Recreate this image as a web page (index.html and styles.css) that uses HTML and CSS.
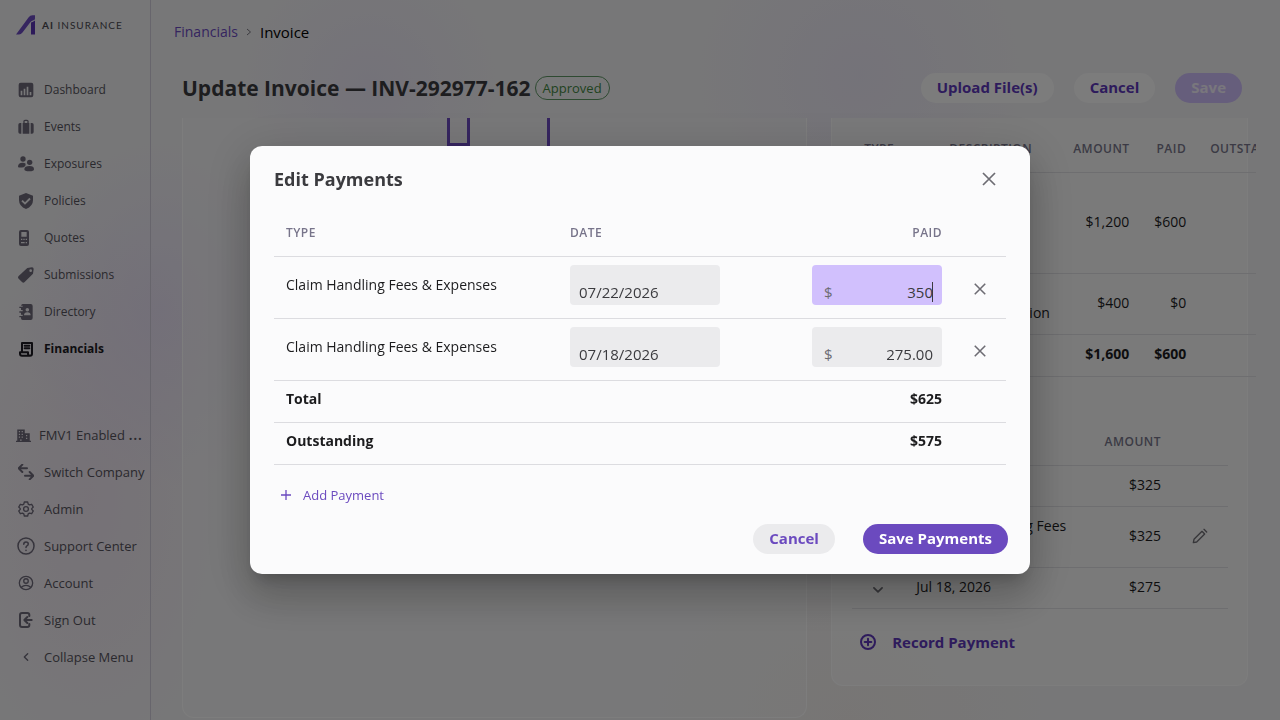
FILE: index.html
```html
<!DOCTYPE html>
<html lang="en">
<head>
<meta charset="utf-8">
<meta name="viewport" content="width=device-width, initial-scale=1">
<title>Update Invoice — INV-292977-162</title>
<link rel="stylesheet" href="styles.css">
</head>
<body>
<div class="app">
  <aside class="sidebar">
    <a class="brand" href="#">
      <svg class="brand-mark" viewBox="0 0 20 20" aria-hidden="true"><path fill="#6b4abf" d="M0 19.500 12.500 2.500Q14 .3 16.500.3H19v3.200q0 1.500-1.500 1.800-2 .4-3 1.700L6.500 17.500q-1.500 2-3.500 2z"/><path fill="#5a35b5" d="M15 7.500q2-.3 4-2v14h-4z"/></svg>
      <span class="brand-name"><b>AI</b> INSURANCE</span>
    </a>
    <nav class="menu" aria-label="Main">
      <a class="item" href="#"><svg viewBox="0 0 24 24"><path fill-rule="evenodd" d="M4 1h16q3 0 3 3v16q0 3-3 3H4q-3 0-3-3V4q0-3 3-3zm0 12v7h2.500v-7zm4.500-3v10H11V10zM13 7v13h2.500V7zm4.500 8v5H20v-5z"/></svg><span>Dashboard</span></a>
      <a class="item" href="#"><svg viewBox="0 0 24 24"><path fill-rule="evenodd" d="M7 22V6h1V3.500Q8 1 10.500 1h3Q16 1 16 3.500V6h1v16zM10 6h4V3h-4zM5 6v16H3q-2.500 0-2.500-2.500v-11Q.5 6 3 6zm14 0v16h2q2.500 0 2.500-2.500v-11Q23.500 6 21 6z"/></svg><span>Events</span></a>
      <a class="item" href="#"><svg viewBox="0 0 24 24"><circle cx="7.500" cy="4.500" r="4"/><circle cx="17.500" cy="9.500" r="4"/><path d="M0 16q0-6 7-6 3 0 4.500 1.500Q12 15 8.500 17 0 18 0 16zM9.500 20q0-5 8-5 6.500 0 6.500 5 0 3-7 3-7.500 0-7.500-3z"/></svg><span>Exposures</span></a>
      <a class="item" href="#"><svg viewBox="0 0 24 24"><path fill-rule="evenodd" d="M12 0 22.500 4v7q0 9-10.500 13Q1.500 20 1.500 11V4zm-5 10.500-2 2 5.500 5.300 8.500-8.600-2-2-6.500 6.600z"/></svg><span>Policies</span></a>
      <a class="item" href="#"><svg viewBox="0 0 24 24"><path fill-rule="evenodd" d="M4.500 0h9q3 0 3 3v18q0 3-3 3h-9q-3 0-3-3V3q0-3 3-3zM5 3v7h8V3zm-.5 10v2h2v-2zM8 13v2h2v-2zm3.500 0v2h2v-2zm-7 5v2H10v-2zm7 0v2h2v-2z"/></svg><span>Quotes</span></a>
      <a class="item" href="#"><svg viewBox="0 0 24 24"><path fill-rule="evenodd" d="M14 1.500 21 .5q2.500 0 2.500 2.500l-1 7L10 22.500q-2 2-4 0L1 17.500q-2-2 0-4zM19 3.500a2 2 0 1 0 0 4 2 2 0 0 0 0-4z"/></svg><span>Submissions</span></a>
      <a class="item" href="#"><svg viewBox="0 0 24 24"><path fill-rule="evenodd" d="M7 0h12q3 0 3 3v18q0 3-3 3H7q-2.500 0-2.500-2.500V20H2v-2h5v-2H4.500v-3H2v-2h5V9H4.500V6H2V4h5V2.500H4.500Q5 0 7 0zm7 6a2.700 2.700 0 1 0 0 5.400A2.700 2.700 0 0 0 14 6zm-5 11h10q0-4.500-5-4.500T9 17z"/></svg><span>Directory</span></a>
      <a class="item active" href="#" aria-current="page"><svg viewBox="0 0 24 24" class="line"><path d="M6 15V3h15v16q0 3-3 3H6q-3 0-3-3v-2h12v2q0 3 3 3M10 7h7M10 11h7"/></svg><span>Financials</span></a>
    </nav>
    <nav class="menu menu-low" aria-label="Account">
      <a class="item company" href="#"><svg viewBox="0 0 24 24"><path fill-rule="evenodd" d="M2 3h12v6h8v12h2v2H0v-2h2zm2.500 2.500v2h2v-2zm4.500 0v2h2v-2zM4.500 10v2h2v-2zM9 10v2h2v-2zm-4.500 4.500v2h2v-2zm4.500 0v2h2v-2zM16 12v2h2v-2zm0 4.500v2h2v-2zM6.500 19v2H9v-2z"/></svg><span>FMV1 Enabled <span class="more">…</span></span></a>
      <a class="item" href="#"><svg viewBox="0 0 24 24" class="line"><path d="M6.500 1 1 6.500 6.500 12M1 6.500h12.500M17.500 12l5.500 5.500-5.500 5.500M23 17.500H10.500"/></svg><span>Switch Company</span></a>
      <a class="item" href="#"><svg viewBox="0 0 24 24" class="line thin"><path d="m9.500 1.500h5l.8 3.200 2 1.200 3.200-1 2.400 4.200-2.300 2.300v1.200l2.300 2.300-2.400 4.200-3.200-1-2 1.200-.8 3.200h-5l-.8-3.200-2-1.200-3.200 1L1.100 14.900l2.300-2.300v-1.200L1.100 9.100l2.400-4.200 3.200 1 2-1.200z"/><circle cx="12" cy="12" r="3.600"/></svg><span>Admin</span></a>
      <a class="item help" href="#"><svg viewBox="0 0 24 24" class="line thin"><circle cx="12" cy="12" r="10.700"/><path d="M9 9.500q0-3 3-3t3 2.700q0 1.800-1.800 2.700-1.200.7-1.200 2.100M12 17.500v.5"/></svg><span>Support Center</span></a>
      <a class="item" href="#"><svg viewBox="0 0 24 24" class="line thin"><circle cx="12" cy="12" r="10"/><circle cx="12" cy="9" r="3.400"/><path d="M5 18.500q3-3 7-3t7 3"/></svg><span>Account</span></a>
      <a class="item" href="#"><svg viewBox="0 0 24 24" class="line"><path d="M17 6V4.500q0-3-3-3H6q-3 0-3 3v15q0 3 3 3h8q3 0 3-3V18M20.500 12H9.500m4.500-4.500L9.500 12l4.500 4.500"/></svg><span>Sign Out</span></a>
      <button class="item" type="button"><svg viewBox="0 0 24 24" class="line thin"><path d="m14.500 7-5 5 5 5"/></svg><span>Collapse Menu</span></button>
    </nav>
  </aside>

  <main class="main">
    <nav class="crumbs" aria-label="Breadcrumb">
      <a href="#">Financials</a>
      <svg viewBox="0 0 8 8" aria-hidden="true"><path d="m2 1 3.500 3L2 7"/></svg>
      <span>Invoice</span>
    </nav>
    <header class="page-head">
      <h1>Update Invoice — INV-292977-162</h1>
      <span class="chip">Approved</span>
      <div class="actions">
        <button class="btn light" type="button">Upload File(s)</button>
        <button class="btn light" type="button">Cancel</button>
        <button class="btn disabled" type="button" disabled>Save</button>
      </div>
    </header>
    <div class="scroll">
      <section class="card preview" aria-label="Invoice preview">
        <svg class="drawing" viewBox="0 0 104 28" aria-hidden="true"><path d="M1.500 0v26.500h20V0M101.500 0v28"/></svg>
      </section>
      <section class="card details" aria-label="Invoice details">
        <table class="grid lines">
          <colgroup><col class="c-type"><col class="c-desc"><col class="c-amt"><col class="c-paid"><col class="c-out"></colgroup>
          <thead><tr><th>Type</th><th>Description</th><th class="num">Amount</th><th class="num">Paid</th><th>Outstanding</th></tr></thead>
          <tbody>
            <tr><td>Claim<br>Handling<br>Fees &amp;<br>Expenses</td><td>Legal</td><td class="num">$1,200</td><td class="num">$600</td><td></td></tr>
            <tr><td>Claim<br>Fees</td><td>Initial<br>case evaluation</td><td class="num">$400</td><td class="num">$0</td><td></td></tr>
            <tr class="strong"><td>Total</td><td></td><td class="num">$1,600</td><td class="num">$600</td><td></td></tr>
          </tbody>
        </table>
        <table class="grid history">
          <colgroup><col class="h-toggle"><col><col class="h-amt"><col class="h-edit"></colgroup>
          <thead><tr><th></th><th>Date</th><th class="num">Amount</th><th></th></tr></thead>
          <tbody>
            <tr><td></td><td>Jul 22, 2026</td><td class="num">$325</td><td></td></tr>
            <tr><td></td><td class="nested">Claim Handling Fees<br>&amp; Expenses</td><td class="num">$325</td><td class="mid edit"><button class="icon-btn" type="button" aria-label="Edit payment"><svg viewBox="0 0 24 24" class="line thin"><path d="m2 22 1-5L15 5l4 4L7 21zM18 2l4 4"/></svg></button></td></tr>
            <tr><td class="mid"><button class="icon-btn toggle" type="button" aria-label="Expand payment"><svg viewBox="0 0 24 24" class="line"><path d="m5 10 7 7 7-7"/></svg></button></td><td>Jul 18, 2026</td><td class="num">$275</td><td></td></tr>
          </tbody>
        </table>
        <button class="record" type="button"><svg viewBox="0 0 24 24" class="line"><circle cx="12" cy="12" r="10.500"/><path d="M12 7v10M7 12h10"/></svg>Record Payment</button>
      </section>
    </div>
  </main>
</div>

<div class="backdrop">
  <form class="modal" role="dialog" aria-modal="true" aria-labelledby="dialog-title">
    <div class="modal-head">
      <h2 id="dialog-title">Edit Payments</h2>
      <button class="icon-btn" type="button" aria-label="Close"><svg viewBox="0 0 24 24" class="line cross"><path d="m3 3 18 18M21 3 3 21"/></svg></button>
    </div>
    <table class="grid payments">
      <colgroup><col class="p-type"><col><col class="p-paid"><col class="p-del"></colgroup>
      <thead><tr><th>Type</th><th>Date</th><th class="num">Paid</th><th></th></tr></thead>
      <tbody>
        <tr class="entry">
          <td>Claim Handling Fees &amp; Expenses</td>
          <td><input class="field date" type="text" value="07/22/2026" aria-label="Date of payment 1"></td>
          <td><label class="money focused"><span>$</span><input type="text" inputmode="decimal" value="350" aria-label="Paid, payment 1"><i class="caret"></i></label></td>
          <td class="mid"><button class="icon-btn remove" type="button" aria-label="Remove payment 1"><svg viewBox="0 0 24 24" class="line cross"><path d="m3 3 18 18M21 3 3 21"/></svg></button></td>
        </tr>
        <tr class="entry">
          <td>Claim Handling Fees &amp; Expenses</td>
          <td><input class="field date" type="text" value="07/18/2026" aria-label="Date of payment 2"></td>
          <td><label class="money"><span>$</span><input type="text" inputmode="decimal" value="275.00" aria-label="Paid, payment 2"></label></td>
          <td class="mid"><button class="icon-btn remove" type="button" aria-label="Remove payment 2"><svg viewBox="0 0 24 24" class="line cross"><path d="m3 3 18 18M21 3 3 21"/></svg></button></td>
        </tr>
        <tr class="strong"><td>Total</td><td></td><td class="num">$625</td><td></td></tr>
        <tr class="strong"><td>Outstanding</td><td></td><td class="num">$575</td><td></td></tr>
      </tbody>
    </table>
    <button class="add" type="button"><svg viewBox="0 0 24 24" class="line cross"><path d="M12 2v20M2 12h20"/></svg>Add Payment</button>
    <div class="modal-foot">
      <button class="btn grey" type="button">Cancel</button>
      <button class="btn primary" type="submit">Save Payments</button>
    </div>
  </form>
</div>
</body>
</html>
```

FILE: styles.css
```css
* { box-sizing: border-box; }

body {
  margin: 0;
  font: 14px/20px "Open Sans", "Noto Sans", sans-serif;
  color: #1c1c1e;
  background: #efeff1;
}

button, input { font: inherit; color: inherit; }
button { border: 0; background: none; padding: 0; cursor: pointer; }
a { color: inherit; text-decoration: none; }
h1, h2 { margin: 0; font-weight: 700; }
svg { fill: currentColor; flex: none; display: block; }
.line { fill: none; stroke: currentColor; stroke-width: 3; stroke-linejoin: round; stroke-linecap: round; }
.line.thin { stroke-width: 2; }
.line.cross { stroke-width: 2.6; stroke-linecap: butt; }

.app {
  display: flex;
  height: 100vh;
  overflow: hidden;
  background:
    radial-gradient(circle at 370px 85px, rgba(212, 196, 246, .24), transparent 140px),
    radial-gradient(circle at 860px 75px, rgba(212, 196, 246, .22), transparent 180px),
    radial-gradient(ellipse 140px 180px at 160px 310px, rgba(212, 192, 246, .3), transparent),
    radial-gradient(ellipse 150px 280px at 90px 500px, rgba(232, 208, 232, .38), transparent),
    radial-gradient(ellipse at 850px 720px, rgba(240, 228, 218, .35), transparent 220px),
    #efeff1;
}

/* Sidebar */
.sidebar {
  width: 151px;
  flex: none;
  border-right: 1px solid #cfcad8;
  padding: 15px 0 0;
}
.brand { display: flex; align-items: center; gap: 6px; padding-left: 16px; height: 20px; }
.brand-mark { width: 20px; height: 20px; }
.brand-name { font: 10px/16px Lato, sans-serif; color: #4a4950; letter-spacing: 1px; white-space: nowrap; }
.menu { display: flex; flex-direction: column; margin-top: 36px; font-size: 12px; }
.menu-low { margin-top: 49px; font-size: 13px; }
.item {
  display: flex;
  align-items: center;
  gap: 10px;
  height: 37px;
  padding-left: 18px;
  color: #6c6878;
  white-space: nowrap;
  text-align: left;
}
.item svg { width: 16px; height: 16px; }
.item span { color: #55535c; }
.item.active, .item.active span { color: #1c1a22; font-weight: 700; }
.item.company { padding-left: 16px; gap: 8px; }
.item.company svg { width: 15px; }
.item.company .more { font-size: 18px; line-height: 18px; }
.item.help { padding-left: 17px; gap: 9px; }
.item.help svg { width: 18px; height: 18px; }

/* Main column */
.main { flex: 1; min-width: 0; display: flex; flex-direction: column; padding: 22px 24px 0 23px; }
.crumbs { display: flex; align-items: center; gap: 7px; height: 20px; color: #000; }
.crumbs a { color: #6b4abf; }
.crumbs span { font-size: 15px; }
.crumbs svg { width: 8px; height: 8px; fill: none; stroke: #77757f; }
.page-head { display: flex; align-items: center; height: 31px; margin-top: 30px; padding: 0 14px 0 8px; }
h1 { font-size: 21px; line-height: 32px; color: #3b3b3f; white-space: nowrap; }
.chip {
  margin-left: 4px;
  padding: 0 7px;
  border: 1px solid #5d9463;
  border-radius: 12px;
  font-size: 13px;
  line-height: 22px;
  color: #41853f;
}
.actions { display: flex; gap: 20px; margin-left: auto; }
.btn { height: 30px; padding: 0 16px 2px; border-radius: 15px; font-weight: 700; font-size: 15px; line-height: 28px; white-space: nowrap; }
.light { background: #f9f9f9; color: #5c37b8; }
.disabled { background: #cdbdf8; color: #f2eefa; }

.scroll {
  flex: 1;
  min-height: 0;
  margin-top: 15px;
  padding: 0 8px;
  overflow: hidden;
  display: grid;
  grid-template-columns: 3fr 2fr;
  gap: 24px;
  align-items: start;
}
.card {
  min-width: 0;
  border: 1px solid #fafafa;
  border-top: 0;
  border-radius: 0 0 12px 12px;
  background: rgba(245, 245, 245, .8);
}
.preview { min-height: 600px; padding-left: 264px; background: rgba(245, 245, 245, .4); }
.drawing { width: 104px; height: 28px; fill: none; stroke: #6b4abf; stroke-width: 3; }
.details { padding: 5px 19px 33px 20px; }

/* Tables */
.grid { border-collapse: separate; border-spacing: 0; table-layout: fixed; width: 100%; }
.grid th {
  height: 50px;
  padding: 2px 12px 0;
  border-bottom: 1px solid #dcdce0;
  font-size: 12px;
  font-weight: 600;
  letter-spacing: .04em;
  text-transform: uppercase;
  text-align: left;
  color: #77748a;
}
.grid td { padding: 9px 12px 11px; border-bottom: 1px solid #dcdce0; }
.grid .num { text-align: right; }
.grid .mid { text-align: center; padding: 0; }
.grid .edit { padding-bottom: 4px; }
.grid .strong td { height: 42px; padding: 8px 12px 12px; font-weight: 700; }
.payments .strong td { padding: 7px 12px 13px; }

.lines { width: 458px; }
.lines td { white-space: nowrap; }
.c-type { width: 85px; }
.c-desc { width: 124px; }
.c-amt { width: 80px; }
.c-paid { width: 57px; }
.history { margin-top: 39px; }
.history .nested { padding-left: 30px; padding-right: 0; }
.h-toggle { width: 52px; }
.h-amt { width: 81px; }
.h-edit { width: 55px; }
.icon-btn { display: inline-flex; vertical-align: middle; color: #6d6c73; }
.icon-btn svg { width: 16px; height: 16px; }
.toggle svg { width: 14px; height: 14px; }
.record { display: flex; align-items: center; gap: 16px; margin: 23px 0 0 8px; font-size: 15px; font-weight: 700; color: #5c37b8; }
.record svg { width: 16px; height: 16px; }

/* Dialog */
.backdrop {
  position: fixed;
  inset: 0;
  display: flex;
  align-items: center;
  justify-content: center;
  background: rgba(0, 0, 0, .5);
}
.modal {
  width: 780px;
  max-width: 94vw;
  padding: 16px 24px 20px;
  border-radius: 12px;
  background: #fbfbfc;
  box-shadow: 0 11px 15px -7px rgba(0, 0, 0, .2), 0 24px 38px 3px rgba(0, 0, 0, .14), 0 9px 46px 8px rgba(0, 0, 0, .12);
}
.modal-head { display: flex; align-items: center; justify-content: space-between; height: 34px; padding-right: 9px; margin-bottom: 11px; }
h2 { font-size: 18px; line-height: 24px; color: #3b3b3f; }
.p-type { width: 284px; }
.p-paid { width: 154px; }
.p-del { width: 52px; }
.payments .entry td { height: 62px; padding-top: 0; padding-bottom: 5px; }
.payments .entry td.mid { padding-bottom: 0; }
.remove svg { width: 14px; height: 14px; }
.field, .money {
  height: 40px;
  border: 0;
  border-radius: 4px;
  background: #ebebed;
  color: #3b3b3f;
  display: block;
  font-size: 15px;
}
.date { width: 150px; padding: 13px 9px 0; }
.money { position: relative; display: flex; align-items: center; width: 130px; padding: 13px 9px 0 12px; }
.money span { color: #6d6c73; }
.money input { flex: 1; min-width: 0; padding: 0; border: 0; outline: 0; background: none; text-align: right; }
.focused { background: #d1c0fd; }
.caret { position: absolute; right: 9px; top: 17px; width: 1px; height: 20px; background: #3b3b3f; }
.add { display: flex; align-items: center; gap: 11px; margin: 20px 0 0 6px; font-size: 13px; color: #6b4abf; }
.add svg { width: 12px; height: 12px; }
.modal-foot { display: flex; justify-content: flex-end; gap: 28px; margin: 19px -2px 0 0; }
.grey { background: #ebebed; color: #6b4abf; }
.primary { background: #6b4abf; color: #fff; }
```
